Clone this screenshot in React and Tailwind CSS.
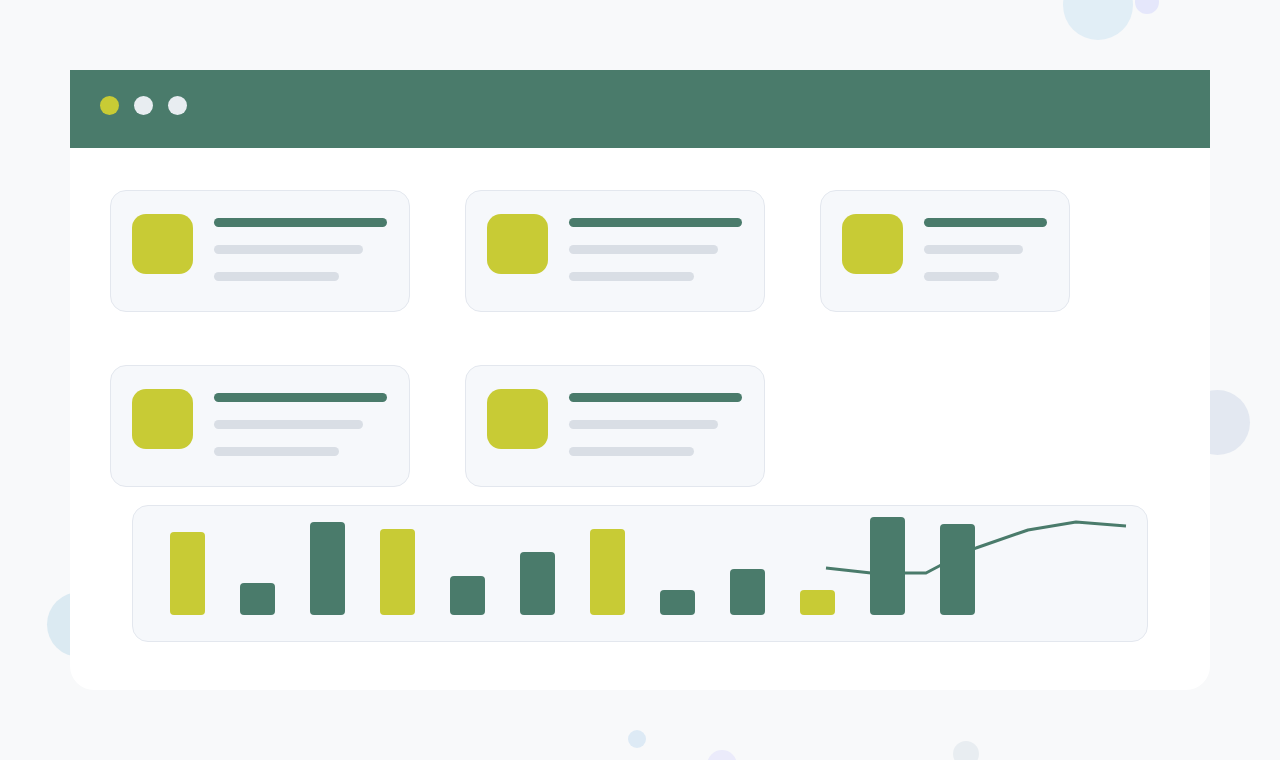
import React from 'react';

const cards = [
  [300, 300, 250],
  [300, 300],
];

const bars = [
  { h: 83, c: 'bg-[#c8cb35]' },
  { h: 32, c: 'bg-[#4a7b6b]' },
  { h: 93, c: 'bg-[#4a7b6b]' },
  { h: 86, c: 'bg-[#c8cb35]' },
  { h: 39, c: 'bg-[#4a7b6b]' },
  { h: 63, c: 'bg-[#4a7b6b]' },
  { h: 86, c: 'bg-[#c8cb35]' },
  { h: 25, c: 'bg-[#4a7b6b]' },
  { h: 46, c: 'bg-[#4a7b6b]' },
  { h: 25, c: 'bg-[#c8cb35]' },
  { h: 98, c: 'bg-[#4a7b6b]' },
  { h: 91, c: 'bg-[#4a7b6b]' },
];

function Card({ width }) {
  return (
    <div
      className="h-[122px] shrink-0 rounded-2xl border border-[#e3e7ee] bg-[#f6f8fb] pl-[21px] pt-[23px] flex gap-[21px]"
      style={{ width }}
    >
      <div className="w-[61px] h-[60px] shrink-0 rounded-[14px] bg-[#c8cb35]" />
      <div className="flex-1 pr-[22px] pt-[4px] flex flex-col gap-[18px]">
        <div className="h-[9px] rounded-full bg-[#4a7b6b]" />
        <div className="h-[9px] rounded-full bg-[#d9dee5] mr-[24px]" />
        <div className="h-[9px] rounded-full bg-[#d9dee5] mr-[48px]" />
      </div>
    </div>
  );
}

export default function App() {
  return (
    <div className="relative h-[760px] w-[1280px] overflow-hidden bg-[#f8f9fa]">
      {/* background bubbles */}
      <div className="absolute left-[1063px] top-[-30px] w-[70px] h-[70px] rounded-full bg-[#e1eef6]" />
      <div className="absolute left-[1135px] top-[-10px] w-[24px] h-[24px] rounded-full bg-[#e5e7fb]" />
      <div className="absolute left-[47px] top-[592px] w-[65px] h-[65px] rounded-full bg-[#dbeaf2]" />
      <div className="absolute left-[1185px] top-[390px] w-[65px] h-[65px] rounded-full bg-[#e3e8f1]" />
      <div className="absolute left-[628px] top-[730px] w-[18px] h-[18px] rounded-full bg-[#ddeaf5]" />
      <div className="absolute left-[707px] top-[750px] w-[30px] h-[30px] rounded-full bg-[#ebebfb]" />
      <div className="absolute left-[953px] top-[741px] w-[26px] h-[26px] rounded-full bg-[#e8edf1]" />

      <div className="relative ml-[70px] mt-[70px] w-[1140px] h-[620px] bg-white rounded-b-[24px] overflow-hidden">
        <div className="h-[78px] bg-[#4a7b6b] flex items-start pl-[30px] pt-[26px] gap-[15px]">
          <div className="w-[19px] h-[19px] rounded-full bg-[#c8cb35]" />
          <div className="w-[19px] h-[19px] rounded-full bg-[#e8edf1]" />
          <div className="w-[19px] h-[19px] rounded-full bg-[#e8edf1]" />
        </div>

        <div className="pl-[40px] pt-[42px] flex flex-col">
          <div className="flex flex-col gap-[53px]">
            {cards.map((row, i) => (
              <div key={i} className="flex gap-[55px]">
                {row.map((w, j) => (
                  <Card key={j} width={w} />
                ))}
              </div>
            ))}
          </div>

          <div className="relative mt-[18px] ml-[22px] w-[1016px] h-[137px] rounded-2xl border border-[#e3e7ee] bg-[#f6f8fb] pl-[37px] pb-[26px] flex items-end gap-[35px]">
            <svg className="absolute left-0 top-0" width="1016" height="137" viewBox="0 0 1016 137">
              <polyline
                points="693,62 738,67 793,67 810,58 843,42 895,24 943,16 993,20"
                fill="none"
                stroke="#4a7b6b"
                strokeWidth="3"
                strokeLinejoin="round"
              />
            </svg>
            {bars.map((b, i) => (
              <div
                key={i}
                className={`relative w-[35px] rounded-[4px] ${b.c}`}
                style={{ height: b.h }}
              />
            ))}
          </div>
        </div>
      </div>
    </div>
  );
}
